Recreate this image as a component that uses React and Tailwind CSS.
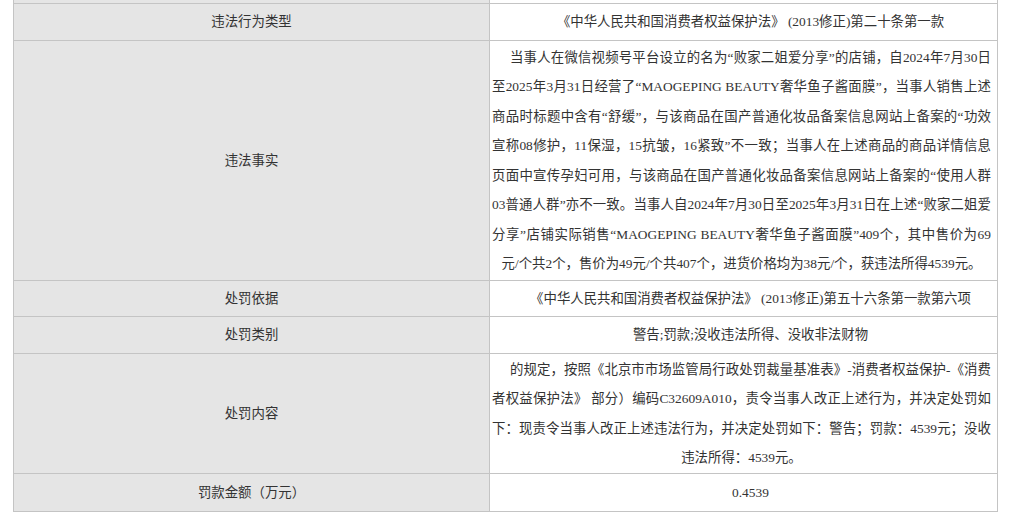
const rows = [
  {
    label: "违法行为类型",
    h: "h-[36px]",
    lines: [["《中华人民共和国消费者权益保护法》 (2013修正)第二十条第一款", "single"]],
  },
  {
    label: "违法事实",
    h: "h-[239px]",
    lines: [
      ["当事人在微信视频号平台设立的名为“败家二姐爱分享”的店铺，自2024年7月30日", "first"],
      ["至2025年3月31日经营了“MAOGEPING BEAUTY奢华鱼子酱面膜”，当事人销售上述", "mid"],
      ["商品时标题中含有“舒缓”，与该商品在国产普通化妆品备案信息网站上备案的“功效", "mid"],
      ["宣称08修护，11保湿，15抗皱，16紧致”不一致；当事人在上述商品的商品详情信息", "mid"],
      ["页面中宣传孕妇可用，与该商品在国产普通化妆品备案信息网站上备案的“使用人群", "mid"],
      ["03普通人群”亦不一致。当事人自2024年7月30日至2025年3月31日在上述“败家二姐爱", "mid"],
      ["分享”店铺实际销售“MAOGEPING BEAUTY奢华鱼子酱面膜”409个，其中售价为69", "mid"],
      ["元/个共2个，售价为49元/个共407个，进货价格均为38元/个，获违法所得4539元。", "last"],
    ],
  },
  {
    label: "处罚依据",
    h: "h-[35px]",
    lines: [["《中华人民共和国消费者权益保护法》 (2013修正)第五十六条第一款第六项", "single"]],
  },
  {
    label: "处罚类别",
    h: "h-[36px]",
    lines: [["警告;罚款;没收违法所得、没收非法财物", "single"]],
  },
  {
    label: "处罚内容",
    h: "h-[119px]",
    lines: [
      ["的规定，按照《北京市市场监管局行政处罚裁量基准表》-消费者权益保护-《消费", "first"],
      ["者权益保护法》 部分）编码C32609A010，责令当事人改正上述行为，并决定处罚如", "mid"],
      ["下：现责令当事人改正上述违法行为，并决定处罚如下：警告；罚款：4539元；没收", "mid"],
      ["违法所得：4539元。", "last"],
    ],
  },
  {
    label: "罚款金额（万元）",
    h: "h-[37px]",
    lines: [["0.4539", "single"]],
  },
];

const Line = ({ text, kind }) => {
  if (kind === "first")
    return <div className="whitespace-nowrap pl-[18px] text-justify [text-align-last:justify]">{text}</div>;
  if (kind === "mid")
    return <div className="whitespace-nowrap text-justify [text-align-last:justify]">{text}</div>;
  if (kind === "single")
    return <div className="whitespace-nowrap pl-[18px] text-center">{text}</div>;
  return <div className="whitespace-nowrap text-center">{text}</div>;
};

export default function App() {
  return (
    <div className="w-[1024px] h-[512px] overflow-hidden bg-white font-['Liberation_Serif','Noto_Sans_CJK_SC',serif] text-[13.4px] leading-[29.5px] text-[#333]">
      <div className="ml-[13px] w-[985px] border-x border-[#c4c4c4]">
        {/* tail of the row above */}
        <div className="flex h-[4px] border-b border-[#c4c4c4]">
          <div className="w-[476px] bg-[#e5e5e5] border-r border-[#c4c4c4]" />
          <div className="flex-1" />
        </div>

        {rows.map((row) => (
          <div key={row.label} className="flex border-b border-[#c4c4c4]">
            <div className={`${row.h} w-[476px] shrink-0 flex items-center justify-center bg-[#e5e5e5] border-r border-[#c4c4c4]`}>
              {row.label}
            </div>
            <div className="flex-1 flex flex-col justify-center pl-[2px] pr-[6px]">
              {row.lines.map(([text, kind], i) => (
                <Line key={i} text={text} kind={kind} />
              ))}
            </div>
          </div>
        ))}
      </div>
    </div>
  );
}
